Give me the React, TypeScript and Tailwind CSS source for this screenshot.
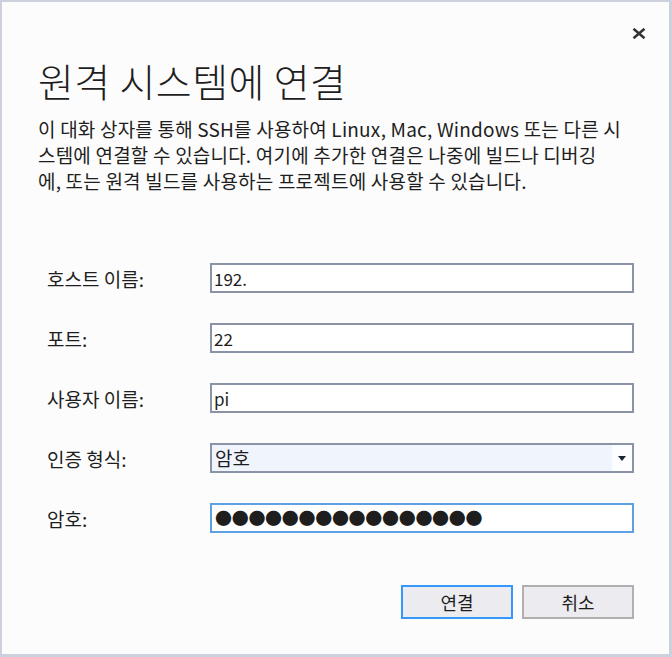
import { useState } from 'react';

// 원격 시스템 연결 대화 상자
const FONT = { fontFamily: '"Noto Sans CJK KR", "Noto Sans", sans-serif' };

const DESCRIPTION = [
  '이 대화 상자를 통해 SSH를 사용하여 Linux, Mac, Windows 또는 다른 시',
  '스템에 연결할 수 있습니다. 여기에 추가한 연결은 나중에 빌드나 디버깅',
  '에, 또는 원격 빌드를 사용하는 프로젝트에 사용할 수 있습니다.',
];

function Field({ label, children }: { label: string; children: React.ReactNode }) {
  return (
    <div className="flex items-center h-[30px]">
      <div className="w-[163px] text-[19px] text-[#1e1e1e] leading-none">{label}</div>
      <div className="flex-1">{children}</div>
    </div>
  );
}

export default function App() {
  const [host, setHost] = useState('192.');
  const [port, setPort] = useState('22');
  const [user, setUser] = useState('pi');

  return (
    <div
      style={FONT}
      className="w-[672px] h-[657px] bg-[#fcfcfc] border-[#cdd0dd] border-l-2 border-t-2 border-r-[3px] border-b-[3px] flex flex-col"
    >
      {/* 닫기 버튼 */}
      <div className="flex justify-end pt-[25px] pr-[22px] h-[46px]">
        <button className="w-[16px] h-[12px] flex items-center justify-center">
          <svg width="14" height="11" viewBox="0 0 14 11">
            <path d="M1.5 0.8 L12.5 10.2 M12.5 0.8 L1.5 10.2" stroke="#333" strokeWidth="2.6" />
          </svg>
        </button>
      </div>

      {/* 제목 */}
      <h1 className="pl-[36px] mt-[13px] text-[39px] tracking-[0.4px] font-light leading-none text-[#1e1e1e]">
        원격 시스템에 연결
      </h1>

      {/* 설명 */}
      <p className="pl-[36px] mt-[16px] text-[19px] tracking-[0.2px] leading-[26px] text-[#1e1e1e]">
        {DESCRIPTION.map((line) => (
          <span key={line} className="block whitespace-nowrap">
            {line}
          </span>
        ))}
      </p>

      {/* 입력 양식 */}
      <div className="flex flex-col gap-[30px] pl-[45px] pr-[35px] mt-[69px]">
        <Field label="호스트 이름:">
          <input
            value={host}
            onChange={(e) => setHost(e.target.value)}
            className="w-full h-[30px] border-2 border-[#8a94a6] bg-white px-[2px] text-[17px] text-[#1e1e1e] outline-none"
          />
        </Field>
        <Field label="포트:">
          <input
            value={port}
            onChange={(e) => setPort(e.target.value)}
            className="w-full h-[30px] border-2 border-[#8a94a6] bg-white px-[2px] text-[17px] text-[#1e1e1e] outline-none"
          />
        </Field>
        <Field label="사용자 이름:">
          <input
            value={user}
            onChange={(e) => setUser(e.target.value)}
            className="w-full h-[30px] border-2 border-[#8a94a6] bg-white px-[2px] text-[17px] text-[#1e1e1e] outline-none"
          />
        </Field>
        <Field label="인증 형식:">
          <div className="w-full h-[30px] border-2 border-[#8a94a6] flex">
            <div className="flex-1 bg-[#f0f4fd] px-[3px] flex items-center text-[19px] text-[#1e1e1e]">암호</div>
            <div className="w-[20px] bg-[#fcfdff] flex items-center justify-center">
              <svg width="8" height="5" viewBox="0 0 8 5">
                <path d="M0 0 H8 L4 5 Z" fill="#1b2433" />
              </svg>
            </div>
          </div>
        </Field>
        <Field label="암호:">
          <div className="w-full h-[30px] border-2 border-[#5ea1e2] bg-white px-[3px] flex items-center text-[17px] tracking-[-0.3px] text-[#1e1e1e]">
            ●●●●●●●●●●●●●●●●
          </div>
        </Field>
      </div>

      {/* 버튼 */}
      <div className="flex justify-end gap-[9px] pr-[35px] mt-[52px]">
        <button className="w-[112px] h-[34px] border-2 border-[#3399ff] bg-[#ececf0] text-[18px] text-[#1e1e1e]">
          연결
        </button>
        <button className="w-[112px] h-[34px] border-2 border-[#b0b0b0] bg-[#ececf0] text-[18px] text-[#1e1e1e]">
          취소
        </button>
      </div>
    </div>
  );
}
